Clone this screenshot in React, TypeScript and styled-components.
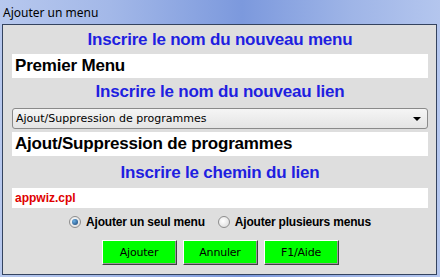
import { createGlobalStyle, styled } from 'styled-components';

const GlobalStyle = createGlobalStyle`
  html, body {
    margin: 0;
    padding: 0;
  }
  body {
    width: 440px;
    height: 277px;
    overflow: hidden;
    background: #a9bee9;
    font-family: 'Liberation Sans', Arial, sans-serif;
  }
`;

const Window = styled.div`
  width: 440px;
  height: 277px;
  box-sizing: border-box;
  display: flex;
  flex-direction: column;
  padding: 0 3px 2px 2px;
  background: linear-gradient(
    90deg,
    #b7c8ee 0%,
    #a3b8e8 25%,
    #7c99dd 55%,
    #9fb5e7 80%,
    #b4c6ee 100%
  );
`;

const TitleBar = styled.div`
  height: 24px;
  flex-shrink: 0;
  display: flex;
  align-items: center;
  padding-left: 1px;
  font-family: 'Noto Sans', 'Open Sans', sans-serif;
  font-size: 12px;
  color: #000;
`;

const Client = styled.div`
  flex: 1;
  border: 1px solid #34435f;
  background: #dedede;
  display: flex;
  flex-direction: column;
  padding: 0 8px 0 9px;
`;

const Heading = styled.div<{ $top: number }>`
  margin-top: ${(p) => p.$top}px;
  height: 20px;
  text-align: center;
  color: #1f1fe0;
  font-family: 'Liberation Sans', Arial, sans-serif;
  font-weight: bold;
  font-size: 17px;
  line-height: 20px;
  letter-spacing: -0.2px;
`;

const Field = styled.div<{
  $top: number;
  $height: number;
  $size: number;
  $color?: string;
}>`
  margin-top: ${(p) => p.$top}px;
  height: ${(p) => p.$height}px;
  background: #fff;
  display: flex;
  align-items: center;
  padding-left: 3px;
  font-family: 'Liberation Sans', Arial, sans-serif;
  font-weight: bold;
  font-size: ${(p) => p.$size}px;
  letter-spacing: ${(p) => (p.$size > 14 ? '-0.2px' : '0')};
  color: ${(p) => p.$color ?? '#000'};
`;

const Select = styled.div`
  margin-top: 6px;
  height: 21px;
  box-sizing: border-box;
  border: 1px solid #8a8a8a;
  border-radius: 3px;
  background: linear-gradient(#f5f5f5, #e4e4e4);
  display: flex;
  align-items: center;
  justify-content: space-between;
  padding: 0 6px 0 3px;
  font-family: 'DejaVu Sans', Tahoma, sans-serif;
  font-size: 11px;
  color: #000;
`;

const Arrow = styled.span`
  width: 0;
  height: 0;
  border-left: 4px solid transparent;
  border-right: 4px solid transparent;
  border-top: 4px solid #000;
`;

const RadioRow = styled.div`
  margin-top: 7px;
  height: 14px;
  display: flex;
  justify-content: center;
  gap: 13px;
  font-family: 'Liberation Sans', Arial, sans-serif;
  font-weight: bold;
  font-size: 12px;
  letter-spacing: -0.2px;
`;

const RadioItem = styled.label`
  display: flex;
  align-items: center;
  gap: 5px;
`;

const RadioDot = styled.span<{ $checked?: boolean }>`
  width: 12px;
  height: 12px;
  box-sizing: border-box;
  border-radius: 50%;
  border: 1px solid #8d8d8d;
  background: radial-gradient(circle at 40% 40%, #fff, #d6d6d6);
  display: flex;
  align-items: center;
  justify-content: center;

  &::after {
    content: '';
    display: ${(p) => (p.$checked ? 'block' : 'none')};
    width: 6px;
    height: 6px;
    border-radius: 50%;
    background: radial-gradient(circle at 35% 35%, #6cb0e4, #143f72);
  }
`;

const ButtonRow = styled.div`
  margin-top: 11px;
  display: flex;
  justify-content: center;
  gap: 6px;
`;

const Button = styled.button`
  width: 75px;
  height: 25px;
  margin: 0;
  padding: 0;
  background: #00ff00;
  border: 1px solid;
  border-color: #fff #404040 #404040 #fff;
  box-shadow: inset -1px -1px 0 #9a9a9a;
  font-family: 'DejaVu Sans', Tahoma, sans-serif;
  font-size: 11px;
  letter-spacing: -0.2px;
  color: #000;
`;

export default function App() {
  return (
    <>
      <GlobalStyle />
      <Window>
        <TitleBar>Ajouter un menu</TitleBar>
        <Client>
          <Heading $top={5}>Inscrire le nom du nouveau menu</Heading>
          <Field $top={4} $height={24} $size={17}>
            Premier Menu
          </Field>
          <Heading $top={4}>Inscrire le nom du nouveau lien</Heading>
          <Select>
            <span>Ajout/Suppression de programmes</span>
            <Arrow />
          </Select>
          <Field $top={3} $height={24} $size={17}>
            Ajout/Suppression de programmes
          </Field>
          <Heading $top={7}>Inscrire le chemin du lien</Heading>
          <Field $top={5} $height={20} $size={12} $color="#e00000">
            appwiz.cpl
          </Field>
          <RadioRow>
            <RadioItem>
              <RadioDot $checked />
              Ajouter un seul menu
            </RadioItem>
            <RadioItem>
              <RadioDot />
              Ajouter plusieurs menus
            </RadioItem>
          </RadioRow>
          <ButtonRow>
            <Button>Ajouter</Button>
            <Button>Annuler</Button>
            <Button>F1/Aide</Button>
          </ButtonRow>
        </Client>
      </Window>
    </>
  );
}
